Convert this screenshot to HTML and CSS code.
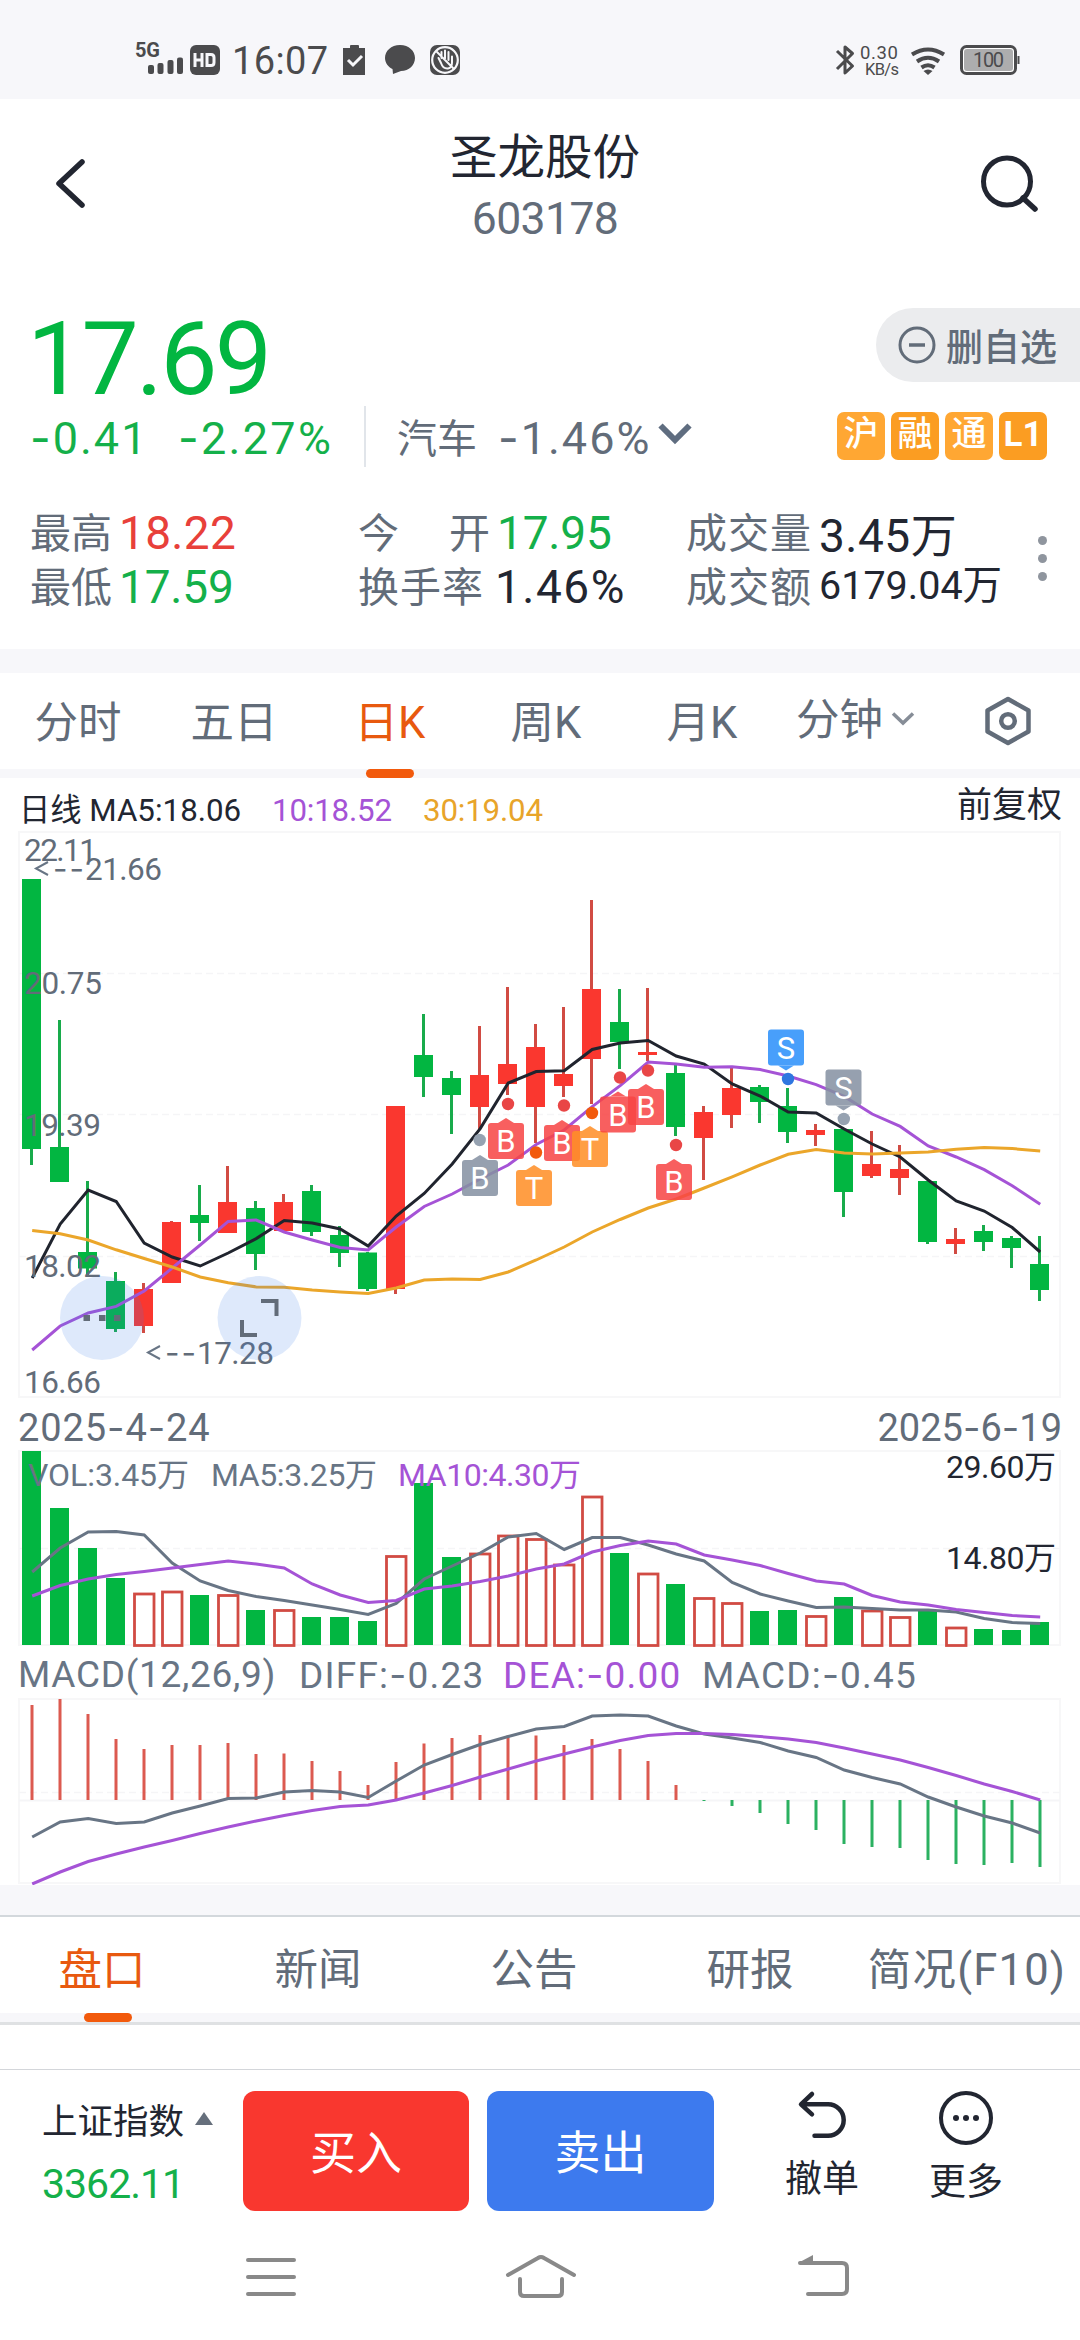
FILE: index.html
```
<!DOCTYPE html>
<html lang="zh-CN">
<head>
<meta charset="utf-8">
<title>圣龙股份 603178</title>
<link rel="stylesheet" href="styles.css">
</head>
<body>
<div class="phone">
  <div class="status">
    <svg class="status-left" viewBox="120 0 350 99" width="350" height="99">
      <text class="s-5g" x="135" y="57" textLength="25">5G</text>
      <g fill="#4b4b4d">
        <rect x="148" y="65" width="6" height="9" rx="2"/><rect x="157.500" y="63" width="6" height="11" rx="2"/><rect x="167.500" y="60" width="6" height="14" rx="2"/><rect x="177" y="57.500" width="6" height="16.500" rx="2"/>
        <rect x="190" y="45" width="30" height="30" rx="6"/>
      </g>
      <path d="M195 53v14M202 53v14M195 60h7M207 54.500v11h4q3 0 3-3v-5q0-3-3-3z" fill="none" stroke="#f7f7fa" stroke-width="3"/>
      <text class="s-time" x="232" y="73.500" textLength="96">16:07</text>
      <path d="M343 48h7v-2q0-1 1-1h7q1 0 1 1v2h6v27h-22z" fill="#4b4b4d"/>
      <path d="M348 60l5 5 9-9" fill="none" stroke="#f7f7fa" stroke-width="3"/>
      <path d="M400 45c9 0 15 6 15 13s-6 13-14 13l-8 3-.5-5c-4-2-7.500-6-7.500-11 0-7 6-13 15-13z" fill="#4b4b4d"/>
      <rect x="430" y="45" width="30" height="30" rx="7" fill="#4b4b4d"/>
      <g fill="none" stroke="#f7f7fa" stroke-width="2.200" stroke-linecap="round"><circle cx="445" cy="60" r="12.800"/><path d="M437 52l16 16M438.500 58l2.500 5q2 6 7 5.500 4-.5 4-6v-6M441.500 52v6M445 50.500v8M448.500 52v8" stroke-width="2"/></g>
    </svg>
    <svg class="status-right" viewBox="830 0 200 99" width="200" height="99">
      <path d="M837 51l15.500 15-7.500 7V47l7.500 6.500L837 69" fill="none" stroke="#4b4b4d" stroke-width="3" stroke-linejoin="round"/>
      <text class="s-net" x="860" y="58.500" textLength="38">0.30</text>
      <text class="s-net kb" x="865" y="75" textLength="34">KB/s</text>
      <g fill="none" stroke="#4b4b4d" stroke-width="4"><path d="M912 54.500q16-10 32 0M917 61.500q11-7.500 22 0M921.500 67.500q6.500-4.500 13 0"/></g>
      <path d="M923.500 71q4.500-3 9 0l-4.500 4z" fill="#4b4b4d"/>
      <rect x="961.500" y="46.500" width="54" height="27" rx="5" fill="#fff" stroke="#4b4b4d" stroke-width="3"/>
      <rect x="964" y="49" width="49" height="22" rx="3" fill="#adadae"/>
      <text class="s-batt" x="973" y="67" textLength="31">100</text>
      <path d="M1018.500 56v8" stroke="#4b4b4d" stroke-width="2"/>
    </svg>
  </div>

  <header class="head">
    <svg width="40" height="60" viewBox="0 0 40 60"><path d="M31 9L8 30.500 31 52" fill="none" stroke="#222631" stroke-width="5.500" stroke-linecap="round" stroke-linejoin="round"/></svg>
    <div class="head-title"><h1>圣龙股份</h1><p>603178</p></div>
    <svg width="64" height="64" viewBox="0 0 64 64"><circle cx="31" cy="28.500" r="23.500" fill="none" stroke="#222631" stroke-width="5"/><path d="M47 45l12 11" stroke="#222631" stroke-width="5.500" stroke-linecap="round"/></svg>
  </header>

  <section class="quote">
    <div class="quote-top">
      <div class="price">17.69</div>
      <div class="pill"><svg width="40" height="40" viewBox="0 0 40 40"><circle cx="20" cy="20" r="17" fill="none" stroke="#626c79" stroke-width="3"/><path d="M12 20h16" stroke="#626c79" stroke-width="3.500"/></svg><span>删自选</span></div>
    </div>
    <div class="change">
      <span class="green c1"><i class="dash">-</i>0.41</span>
      <span class="green c2"><i class="dash">-</i>2.27%</span>
      <span class="rule"></span>
      <span class="industry">汽车</span>
      <span class="ind-val"><i class="dash">-</i>1.46%</span>
      <svg class="ind-arrow" width="34" height="24" viewBox="0 0 34 24"><path d="M2.500 3.500L17 18 31.500 3.500" fill="none" stroke="#5f6d80" stroke-width="6"/></svg>
      <span class="tags"><b>沪</b><b class="deep">融</b><b>通</b><b class="deep">L1</b></span>
    </div>
    <div class="stats">
      <div class="stat"><label>最高</label><em class="red">18.22</em></div>
      <div class="stat"><label class="spread"><span>今</span><span>开</span></label><em class="green">17.95</em></div>
      <div class="stat"><label class="turn">成交量</label><em class="flat">3.45万</em></div>
      <div class="stat"><label>最低</label><em class="green">17.59</em></div>
      <div class="stat"><label class="turn">换手率</label><em class="wide">1.46%</em></div>
      <div class="stat"><label class="turn">成交额</label><em class="small">6179.04万</em></div>
      <div class="kebab"><span></span><span></span><span></span></div>
    </div>
  </section>

  <nav class="periods">
    <span>分时</span><span>五日</span><span class="on">日K</span><span>周K</span><span>月K</span>
    <span class="minute">分钟<svg width="24" height="16" viewBox="0 0 24 16"><path d="M2 2.500l10 9.500 10-9.500" fill="none" stroke="#868d97" stroke-width="3.500"/></svg></span>
    <svg width="48" height="52" viewBox="0 0 48 52"><path d="M24 4l20.500 11.500v21L24 48 3.500 36.500v-21z" fill="none" stroke="#626c79" stroke-width="4.500" stroke-linejoin="round"/><circle cx="24" cy="26" r="6.800" fill="none" stroke="#626c79" stroke-width="4.500"/></svg>
  </nav>

  <section class="charts">
    <div class="ma-row"><span class="ink">日线 MA5:18.06</span><span class="violet ma10">10:18.52</span><span class="amber ma30">30:19.04</span><span class="adj">前复权</span></div>
    <svg id="price" viewBox="0 831 1080 567" width="1080" height="567"></svg>
    <div class="date-row"><span class="from">2025<i class="dash">-</i>4<i class="dash">-</i>24</span><span>2025<i class="dash">-</i>6<i class="dash">-</i>19</span></div>
    <svg id="volume" viewBox="0 1450 1080 198" width="1080" height="198"></svg>
    <div class="macd-row"><span>MACD(12,26,9)</span><span class="diff">DIFF:<i class="dash">-</i>0.23</span><span class="dea violet">DEA:<i class="dash">-</i>0.00</span><span class="macd">MACD:<i class="dash">-</i>0.45</span></div>
    <svg id="macd" viewBox="0 1698 1080 187" width="1080" height="187"></svg>
  </section>

  <nav class="sections"><span class="on">盘口</span><span>新闻</span><span>公告</span><span>研报</span><span>简况(F10)</span></nav>

  <div class="trade">
    <div class="index"><p>上证指数<svg width="18" height="13" viewBox="0 0 18 13"><path d="M9 0l9 13H0z" fill="#666f7c"/></svg></p><p class="green">3362.11</p></div>
    <button class="buy">买入</button>
    <button class="sell">卖出</button>
    <div class="action undo"><svg width="56" height="56" viewBox="0 0 56 56"><path d="M18 4L7 14.300l11 10M8 14.300h26a15.700 15.700 0 0 1 0 31.400H20.500" fill="none" stroke="#222631" stroke-width="4.500" stroke-linecap="round" stroke-linejoin="round"/></svg><span>撤单</span></div>
    <div class="action more"><svg width="56" height="56" viewBox="0 0 56 56"><circle cx="28" cy="28" r="25" fill="none" stroke="#222631" stroke-width="4"/><g fill="#222631"><circle cx="18" cy="28" r="3"/><circle cx="28" cy="28" r="3"/><circle cx="38" cy="28" r="3"/></g></svg><span>更多</span></div>
  </div>

  <div class="sysnav">
    <svg width="50" height="60" viewBox="246 2247 50 60"><path d="M248 2260h46M248 2277h46M248 2294h46"/></svg>
    <svg width="74" height="60" viewBox="504 2247 74 60"><path d="M508 2275l30-17q3-2 6 0l30 17M520 2279v13q0 4 4 4h34q4 0 4-4v-13"/></svg>
    <svg width="54" height="60" viewBox="797 2247 54 60"><path d="M800 2263h42q5 0 5 5v21q0 5-5 5h-34"/><path d="M798 2263l15-8v8z" fill="#898989" stroke="none"/></svg>
  </div>
</div>
<script src="app.js"></script>
</body>
</html>
```
FILE: styles.css
```
* { box-sizing: border-box; margin: 0; padding: 0; }
body { width: 1080px; background: #fff; color: #222631; font-family: Roboto, "Noto Sans CJK SC", sans-serif; }
.phone { width: 1080px; height: 2340px; overflow: hidden; display: flex; flex-direction: column; }
svg { display: block; flex: none; }
i.dash { font-style: normal; font-family: Inter, sans-serif; }
.green { color: #14b04a; }
.red { color: #e8403a; }
.violet { color: #a553d6; }
.amber { color: #e8a42a; }

.status { height: 99px; background: #f7f7fa; display: flex; justify-content: space-between; padding: 0 50px 0 120px; }
.status text { fill: #4b4b4d; }
.s-5g { font-size: 20px; font-weight: 700; }
.s-time { font-size: 38px; }
.s-net { font-size: 18.500px; }
.s-net.kb { font-size: 16.500px; }
.s-batt { font-size: 20px; fill: #39393b; }

.head { height: 186px; display: flex; justify-content: space-between; padding: 54px 40px 0 51px; }
.head-title { margin-top: -22px; margin-left: 23px; text-align: center; }
.head-title h1 { font-weight: 400; font-size: 47.500px; line-height: 54px; }
.head-title p { font-size: 44.500px; line-height: 52px; margin-top: 8px; color: #626c79; letter-spacing: -.6px; }

.quote { height: 364px; padding-left: 30px; }
.quote-top { height: 118px; display: flex; justify-content: space-between; padding-top: 23px; }
.price { font-size: 102px; line-height: 102px; color: #02b641; letter-spacing: -2.800px; margin-left: -3px; }
.pill { width: 204px; height: 74px; border-radius: 37px 0 0 37px; background: #ebecee; color: #626c79; display: flex; align-items: center; padding-left: 21px; gap: 9px; font-size: 37px; font-weight: 500; }
.change { height: 66px; display: flex; align-items: center; font-size: 45px; color: #626c79; }
.c1 { width: 148px; }
.c2 { width: 186px; }
.c1, .c2, .ind-val { white-space: nowrap; letter-spacing: 2px; padding-top: 2px; }
.c2 { letter-spacing: 2.300px; }
.rule { width: 2px; height: 61px; background: #e1e5ea; }
.industry { font-size: 40px; margin-left: 31px; width: 101px; }
.ind-val { width: 160px; }
.tags { margin-left: 145px; display: flex; gap: 6px; }
.tags b { width: 48px; height: 48px; border-radius: 7px; background: #ffa733; color: #fff; font-size: 35px; font-weight: 500; line-height: 46px; text-align: center; }
.tags b.deep { background: #fb9d22; }
.tags b:last-child { font-weight: 700; }
.ind-arrow { margin-bottom: 4px; }
.stats { position: relative; margin-top: 34px; display: grid; grid-template-columns: 328px 328px 1fr; grid-auto-rows: 54px; }
.stat { display: flex; align-items: center; }
.stat label { font-size: 41px; color: #626c79; margin-right: 7px; }
.stat label.turn { letter-spacing: 1px; }
.spread { width: 132px; display: flex; justify-content: space-between; }
.stat em { font-style: normal; font-size: 46px; letter-spacing: .3px; padding-top: 6px; }
.stat em.green { letter-spacing: -.2px; }
.stat em.wide { letter-spacing: 1.500px; margin-left: 4px; }
.stat em.flat { margin-left: 0; padding-top: 3px; letter-spacing: .5px; }
.stat em.small { font-size: 39.500px; margin-left: 0; padding: 0 0 5px; letter-spacing: 0; }
.kebab { position: absolute; left: 1008px; top: 33px; display: grid; gap: 9px; }
.kebab span { width: 9px; height: 9px; border-radius: 50%; background: #8f959e; }

.periods { height: 129px; border-top: 24px solid #f7f7fa; border-bottom: 9px solid #f7f7fa; display: flex; align-items: center; font-size: 43.500px; color: #626c79; }
.periods > span { width: 156px; height: 96px; line-height: 102px; text-align: center; position: relative; white-space: nowrap; }
.periods .on, .sections .on { color: #e8590f; }
.periods .on::after, .sections .on::after { content: ""; position: absolute; left: 54px; bottom: -9px; width: 48px; height: 9px; border-radius: 5px; background: #f25a0c; }
.periods .minute { width: 120px; margin: 0 68px 0 16px; display: flex; align-items: center; gap: 8px; }
.minute svg { margin-bottom: 4px; }

.charts { background: #fff; }
.ma-row { height: 53px; display: flex; align-items: baseline; padding: 7px 18px 0 19px; font-size: 31.300px; white-space: nowrap; }
.ma-row .ink { width: 253px; }
.ma10 { width: 151px; }
.ma10, .ma30 { letter-spacing: -.2px; }
.adj { margin-left: auto; font-size: 35px; position: relative; top: -4px; line-height: 40px; }
.date-row { height: 52px; display: flex; justify-content: space-between; align-items: center; padding: 5px 18px 0 18px; font-size: 38px; color: #626c79; }
.date-row .from { letter-spacing: .9px; }
.macd-row { height: 50px; display: flex; align-items: center; padding: 2px 0 0 18px; font-size: 37px; color: #687585; white-space: nowrap; letter-spacing: 1.200px; }
.macd-row .violet { color: #a553d6; }
.macd-row > span:first-child { width: 281px; letter-spacing: .7px; }
.macd-row .diff { width: 204px; }
.macd-row .dea { width: 199px; }
.axis { font-size: 31.500px; fill: #626c79; }
.axis.dash { font-family: Inter, sans-serif; }
.label { font-size: 32px; }
.mark { font-size: 31px; fill: #fff; text-anchor: middle; }

.sections { height: 140px; border-top: 30px solid #f7f7fa; display: flex; font-size: 43.500px; color: #626c79; box-shadow: inset 0 2px #d3d8dc, inset 0 -3px #dfe1e3, inset 0 -12px #f7f7fa; }
.sections > span { width: 216px; height: 110px; line-height: 111px; padding-right: 12px; text-align: center; position: relative; white-space: nowrap; }
.sections .on::after { left: 84px; bottom: 3px; }
.sections > span:last-child { padding-right: 10px; letter-spacing: 1.200px; }

.trade { height: 176px; margin-top: 44px; border-top: 1px solid #d3d6da; display: flex; }
.index { width: 243px; padding: 25px 0 0 42px; font-size: 35.500px; }
.index p { display: flex; align-items: center; gap: 11px; height: 46px; }
.index .green { font-size: 41px; margin-top: 20px; letter-spacing: -1px; }
.trade button { width: 226px; height: 120px; margin: 21px 18px 0 0; border: 0; border-radius: 12px; color: #fff; font: 46px Roboto, "Noto Sans CJK SC", sans-serif; padding-bottom: 4px; }
.buy { background: #f9372f; }
.trade .sell { background: #3d7aee; width: 227px; margin-right: 70px; }
.action { width: 76px; padding-top: 20px; display: flex; flex-direction: column; align-items: center; font-size: 37px; line-height: 48px; }
.action span { margin-top: 10px; }
.undo { margin-right: 68px; }
.more span { margin-top: 13px; }

.sysnav { height: 62px; margin-top: 2px; display: flex; padding-left: 246px; fill: none; stroke: #898989; stroke-width: 4; stroke-linecap: round; }
.sysnav svg:nth-child(2) { margin-left: 208px; }
.sysnav svg:nth-child(3) { margin-left: 219px; }
```
FILE: app.js
```
const STEP = 28, X0 = 31.5;
const cx = i => X0 + STEP * i;
const GREEN = '#02b641', RED = '#fa372f', WIRE = '#d14b43';
const SLATE = '#687585', VIOLET = '#a553d6';

// [direction, body top, body bottom, high, low]
const candles = [
  ['g',879,1149,879,1165],['g',1147,1182,1020,1182],['g',1252,1268.5,1181,1275],['g',1281,1329,1272,1332],
  ['r',1289,1326,1283,1333],['r',1222,1283,1221,1283],['g',1215,1223,1185,1241],['r',1202,1233,1166,1233],
  ['g',1208,1254,1201,1270],['r',1202,1231,1194,1231],['g',1191,1232,1185,1236],['g',1235,1253,1226,1267],
  ['g',1252.5,1289,1252,1291],['r',1106,1289,1106,1294],['g',1055,1077,1014,1097],['g',1078,1095,1071,1134],
  ['r',1075,1107,1026,1130],['r',1064,1084,987,1095],['r',1047,1107,1024,1143],['r',1074,1086,1007,1097],
  ['r',989,1059,900,1104],['g',1022,1042,989,1069],['r',1052,1055,988,1061],['g',1073,1127,1065,1136],
  ['r',1112,1138,1106,1180],['r',1088,1115,1068,1128],['g',1087,1102,1085,1123],['g',1106,1132,1088,1143],
  ['r',1130,1135,1124,1146],['g',1129,1192,1129,1217],['r',1164,1176,1131,1178],['r',1169,1178,1145,1195],
  ['g',1181,1242,1181,1244],['r',1239,1244,1228,1254],['g',1231,1242,1225,1251],['g',1238,1248,1236,1268],
  ['g',1264,1290,1236,1301]
];
const ma5 = [1278,1224,1190,1201.5,1243,1257,1266,1253,1238.6,1220.6,1223,1229,1246,1216,1193.5,1164,1128.6,1083,1071.5,1070.8,1049.5,1043,1040.5,1056,1064,1084,1096,1112,1113,1129,1144,1157,1180,1201,1211,1227.5,1252];
const ma10 = [1350,1326,1313,1306.4,1291,1268,1245,1221.4,1220,1232,1240,1247.5,1250,1227,1206.5,1194,1179,1165,1144.5,1130,1106.6,1085.6,1062,1064,1067.3,1066.8,1069.6,1076,1084.6,1096.4,1114,1126.4,1146,1157,1169.6,1185.7,1204.3];
const ma30 = [1230.6,1233.7,1240,1249.8,1258.5,1267,1277,1282.7,1286.9,1287.3,1290,1292,1293.4,1288,1280,1279,1279.5,1272,1260,1247,1232,1219.5,1208,1199,1188,1176.8,1165,1154.3,1149.6,1153,1154,1153,1152,1149.3,1147.5,1148.6,1151];
const volTop = [1451,1508,1548,1578,1594,1592,1595,1595.5,1610,1610.5,1617,1617,1621,1556.5,1483,1557,1554,1536,1539.5,1565,1497,1553,1574,1584,1598.5,1603.5,1611,1610,1616.5,1597,1611,1617.5,1610.5,1628,1629,1630,1622];
const vol5 = [1572,1548,1532,1531.5,1535,1563,1581,1590.5,1596.5,1600.5,1605,1609.5,1614.5,1603.5,1579,1566,1553,1537,1533.5,1549.5,1537.5,1537.5,1545,1554,1561,1582.5,1594,1601,1607.5,1607,1608.5,1610,1610,1612,1618.5,1622.5,1623.5];
const vol10 = [1596,1585.5,1579,1574.5,1571.5,1568,1564.5,1561,1564,1568,1584,1595,1602.5,1600.5,1589,1586,1581.5,1576,1569,1564,1552,1545.5,1541,1544,1555,1560,1565.5,1573.5,1581,1584,1595.5,1602,1605,1609.5,1612.5,1615.5,1617];
const hist = [1705,1699,1714,1739,1749,1745,1745,1743,1754,1753.5,1761,1771,1785,1762,1743.5,1738,1735,1735.5,1735.5,1745,1739,1749,1761,1785,1801,1806,1813,1824,1830,1844,1847,1848,1860,1864,1865,1863,1867];
const diff = [1837,1822,1818.5,1823.5,1822,1813,1806,1798.5,1798,1792,1790.5,1792,1797.5,1781,1765,1754.5,1744.5,1736.5,1729,1726.5,1716,1715,1716,1726,1734,1738,1742.5,1751,1757.5,1770,1777.5,1784,1797,1807,1816,1823,1833];
const dea = [1884,1872,1861.5,1854,1847,1840.5,1833.5,1827,1821,1815.5,1810.5,1806.5,1805,1800,1793,1785.5,1777,1769,1761,1754,1747,1740.5,1735.5,1733.5,1733.5,1734.5,1736.5,1739,1742.5,1748,1754,1760,1767.5,1775.5,1784,1791.5,1800];

// [letter, colour, box left, box top, dot x, dot y, dot colour, pointer side]
const marks = [
  ['B','#8591a2',462,1160,479.7,1140,'#96a2b1','up'],
  ['B','#f84545',488,1123,508,1104,'#e94646','up'],
  ['T','#ff8f26',516,1170,536,1152.5,'#f25a0c','up'],
  ['B','#f84545',544,1125,564,1105.5,'#e94646','up'],
  ['T','#ff8f26',572,1131,592,1113,'#f25a0c','up'],
  ['B','#f84545',600,1096.5,620,1077.5,'#e94646','up'],
  ['B','#f84545',628,1089,648,1070.5,'#e94646','up'],
  ['B','#f84545',656,1164,676,1145,'#e94646','up'],
  ['S','#2b90fb',768,1029.5,788,1079,'#2f76e0','down'],
  ['S','#8591a2',825.5,1069.5,843.8,1119,'#96a2b1','down']
];

const rect = (x, y, w, h, extra) => `<rect x="${x}" y="${y}" width="${w}" height="${h}" ${extra}/>`;
const hline = (y, dash) => `<path d="M19 ${y}H1060" stroke="#f5f5f7" stroke-width="${dash ? 1.5 : 2}" ${dash ? 'stroke-dasharray="7 4"' : ''} fill="none"/>`;
const frame = (t, b) => rect(19, t, 1041, b - t, 'fill="none" stroke="#f7f7f8" stroke-width="2"');
const curve = (ys, color) => `<polyline points="${ys.map((y, i) => (cx(i) + 0.7) + ',' + y).join(' ')}" fill="none" stroke="${color}" stroke-width="3"/>`;
const text = (s, x, y, w, cls, extra = '') => `<text class="${cls}" x="${x}" y="${y}" textLength="${w}" ${extra}>${s}</text>`;
const arrowText = (n, x, y) =>
  `<path d="M${x + 14} ${y - 18}l-12 6.500 12 6.500" fill="none" stroke="${SLATE}" stroke-width="2"/>` +
  text('--', x + 19, y, 31, 'axis dash') + text(n, x + 51, y, 77, 'axis');

let p = frame(832, 1397) + hline(973.5, 1) + hline(1114.5, 1) + hline(1256.5, 1);
candles.forEach(([d, t, b, hi, lo], i) => {
  const c = d === 'g' ? GREEN : RED;
  p += rect(cx(i) - 1.5, hi, 3, lo - hi, `fill="${d === 'g' ? '#18ab4b' : WIRE}"`) + rect(cx(i) - 9.5, t, 19, b - t, `fill="${c}"`);
});
p += curve(ma5, '#20242e') + curve(ma10, VIOLET) + curve(ma30, '#eba62a');
[['22.11', 861, 73], ['20.75', 994, 78], ['19.39', 1135.5, 77], ['18.02', 1276.5, 77], ['16.66', 1392.5, 77]].forEach(([s, y, w]) => { p += text(s, 24, y, w, 'axis'); });
p += arrowText('21.66', 34, 880) + arrowText('17.28', 146, 1364);
marks.forEach(([s, c, x, y, dx, dy, dc, side]) => {
  const m = x + 18;
  const tip = side === 'up' ? `M${m - 8} ${y}l8-5 8 5z` : `M${m - 8} ${y + 36}l8 5 8-5z`;
  p += `<circle cx="${dx}" cy="${dy}" r="6.200" fill="${dc}"/><g opacity=".86"><path d="${tip}" fill="${c}"/>${rect(x, y, 36, 36, `rx="3" fill="${c}"`)}</g><text class="mark" x="${m}" y="${y + 29}">${s}</text>`;
});
p += '<g fill="#3c7eea" fill-opacity=".17"><circle cx="102" cy="1318" r="42"/><circle cx="259.500" cy="1318" r="42"/></g>';
p += '<path d="M83.500 1318h6.500M99 1318h6.500M114 1318h6.500" stroke="#626c79" stroke-width="6"/>';
p += '<path d="M261 1301h15.500v15M242 1320v15h15" fill="none" stroke="#626c79" stroke-width="4"/>';
document.getElementById('price').innerHTML = p;

let v = frame(1451, 1645) + hline(1548.5, 1);
volTop.forEach((t, i) => {
  v += candles[i][0] === 'g'
    ? rect(cx(i) - 9.5, t, 19, 1645 - t, `fill="${GREEN}"`)
    : rect(cx(i) - 9, t, 19.5, 1645.5 - t, `fill="#fff" stroke="${WIRE}" stroke-width="2.8"`);
});
v += curve(vol5, SLATE) + curve(vol10, VIOLET);
v += text('VOL:3.45万', 28, 1486, 161, 'label', `fill="${SLATE}"`) + text('MA5:3.25万', 211, 1486, 166, 'label', `fill="${SLATE}"`) + text('MA10:4.30万', 398, 1486, 183, 'label', `fill="${VIOLET}"`);
v += text('29.60万', 946, 1478, 110, 'label', 'fill="#222631"') + text('14.80万', 946, 1569, 110, 'label', 'fill="#222631"');
document.getElementById('volume').innerHTML = v;

let m = frame(1699, 1883) + hline(1792.5, 1) + hline(1800.5);
hist.forEach((y, i) => {
  m += rect(cx(i) - 1, Math.min(y, 1800), 3, Math.abs(1800 - y), `fill="${y < 1800 ? '#dc5a50' : '#2bb161'}"`);
});
m += curve(diff, SLATE) + curve(dea, VIOLET);
document.getElementById('macd').innerHTML = m;
```
